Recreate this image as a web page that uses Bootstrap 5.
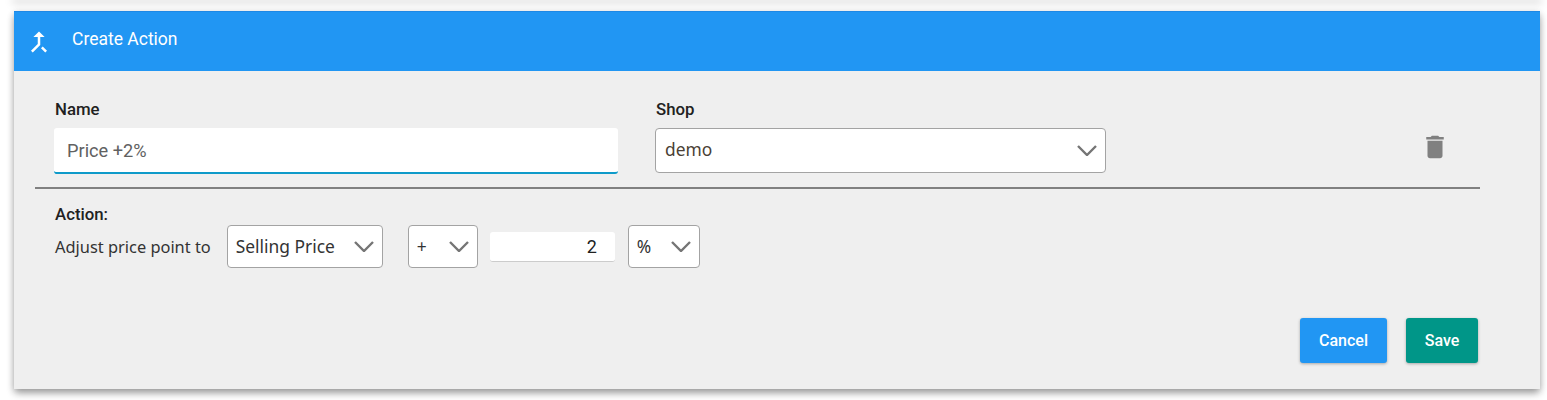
<!DOCTYPE html>
<html lang="en">
<head>
<meta charset="utf-8">
<title>Create Action</title>
<link href="https://cdn.jsdelivr.net/npm/bootstrap@5.3.0/dist/css/bootstrap.min.css" rel="stylesheet">
<style>
html,body{height:400px;overflow:hidden;background:#fff;font-family:Roboto,sans-serif}
.prev-panel{height:0;margin:0 7px 0 14px;box-shadow:0 1px 8px 2px rgba(0,0,0,.2)}
.action-panel{margin:11px 7px 0 14px;height:378px;background:#efefef;border:0;border-radius:0;box-shadow:0 5px 8px -1px rgba(0,0,0,.3),0 2px 7px rgba(0,0,0,.2)}
.panel-head{height:60px;background:#2196f3;color:#fff;font-size:17.5px;font-weight:400;padding:0 0 0 9.500px;gap:18.500px;border-top:1px solid #1e88e5}
.head-text{position:relative;top:-2px}
.panel-body{padding:27px 60px 0 21px}
.field-row{padding:0 0 13px 19px;height:89px}
.name-col{width:564px;margin-right:37px}
.shop-col{width:451px}
.f-label{font-size:16.8px;font-weight:500;color:#212121;line-height:22px;margin:0 0 8px 1px;display:block}
.name-input{height:46px;border:0;border-bottom:2px solid #0e9ac9;border-radius:3px;font:18.2px Roboto,sans-serif;color:#616161;padding:0 13px;box-shadow:none;background:#fff}
.pick{font-family:"Noto Sans",sans-serif;font-size:17.4px;color:#4a3f35;height:45px;padding:0 36px 3px 9px;border:1px solid #a3a3a3;border-radius:4px;background-color:#fff;background-image:url("data:image/svg+xml,%3Csvg xmlns='http://www.w3.org/2000/svg' viewBox='0 0 20 11'%3E%3Cpath d='M1 1l9 9 9-9' fill='none' stroke='%23757575' stroke-width='2.4'/%3E%3C/svg%3E");background-size:20px 11px;background-position:right 8px center}
.pick-sm{height:43px;color:#333;padding-bottom:1px;padding-left:8px}
.w-price{width:156px}.w-sign{width:70px;margin-left:25px}.w-unit{width:72px}
.trash-box{margin-left:auto;margin-right:30px;padding-top:34px;line-height:0}
.rule-line{height:2px;background:#808080;opacity:1;border:0;margin:0}
.action-area{padding:14px 0 0 19px}
.action-title{font-size:16.8px;font-weight:500;color:#212121;line-height:22px;margin:0 0 0 1px}
.action-row{height:43px;color:#333}
.adj-text{font:16.4px "Noto Sans",sans-serif;color:#333;margin:0 16px 0 1px}
.num-input{width:125px;height:30px;border:0;border-bottom:1px solid #ccc;border-radius:3px;padding:0 18px 0 0;text-align:right;font:18px Roboto,sans-serif;color:#212121;background:#fff;margin:0 13px 0 12px}
.foot-row{margin-top:50px;gap:19px;margin-right:2px}
.act-btn{height:45px;color:#fff;font-size:16px;font-weight:500;border:0;border-radius:3px;box-shadow:0 1px 3px rgba(0,0,0,.3)}
.act-btn:hover{color:#fff}
.btn-cancel{width:87px;background:#2196f3}
.btn-save{width:72px;background:#009688}
</style>
</head>
<body>
<div class="prev-panel"></div>
<div class="card action-panel">
  <div class="panel-head d-flex align-items-center">
    <svg width="30" height="30" viewBox="0 0 24 24" aria-hidden="true"><path d="M17 20.410L18.410 19 15 15.590 13.590 17 17 20.410zM7.500 8H11v5.590L5.590 19 7 20.410l6-6V8h3.500L12 3.500 7.500 8z" fill="#fff"/></svg>
    <span class="head-text">Create Action</span>
  </div>
  <div class="panel-body">
    <div class="field-row d-flex">
      <div class="name-col">
        <label class="f-label">Name</label>
        <input class="form-control name-input" type="text" value="Price +2%">
      </div>
      <div class="shop-col">
        <label class="f-label">Shop</label>
        <select class="form-select pick"><option>demo</option></select>
      </div>
      <div class="trash-box">
        <svg width="30" height="30" viewBox="0 0 24 24" aria-hidden="true"><path d="M6 19c0 1.100.9 2 2 2h8c1.100 0 2-.9 2-2V7H6v12zM19 4h-3.500l-1-1h-5l-1 1H5v2h14V4z" fill="#808080"/></svg>
      </div>
    </div>
    <hr class="rule-line">
    <div class="action-area">
      <div class="action-title">Action:</div>
      <div class="action-row d-flex align-items-center">
        <span class="adj-text">Adjust price point to</span>
        <select class="form-select pick pick-sm w-price"><option>Selling Price</option></select>
        <select class="form-select pick pick-sm w-sign"><option>+</option></select>
        <input class="form-control num-input" type="text" value="2">
        <select class="form-select pick pick-sm w-unit"><option>%</option></select>
      </div>
    </div>
    <div class="foot-row d-flex justify-content-end">
      <button class="btn act-btn btn-cancel" type="button">Cancel</button>
      <button class="btn act-btn btn-save" type="button">Save</button>
    </div>
  </div>
</div>
<script src="https://cdn.jsdelivr.net/npm/bootstrap@5.3.0/dist/js/bootstrap.bundle.min.js"></script>
</body>
</html>
